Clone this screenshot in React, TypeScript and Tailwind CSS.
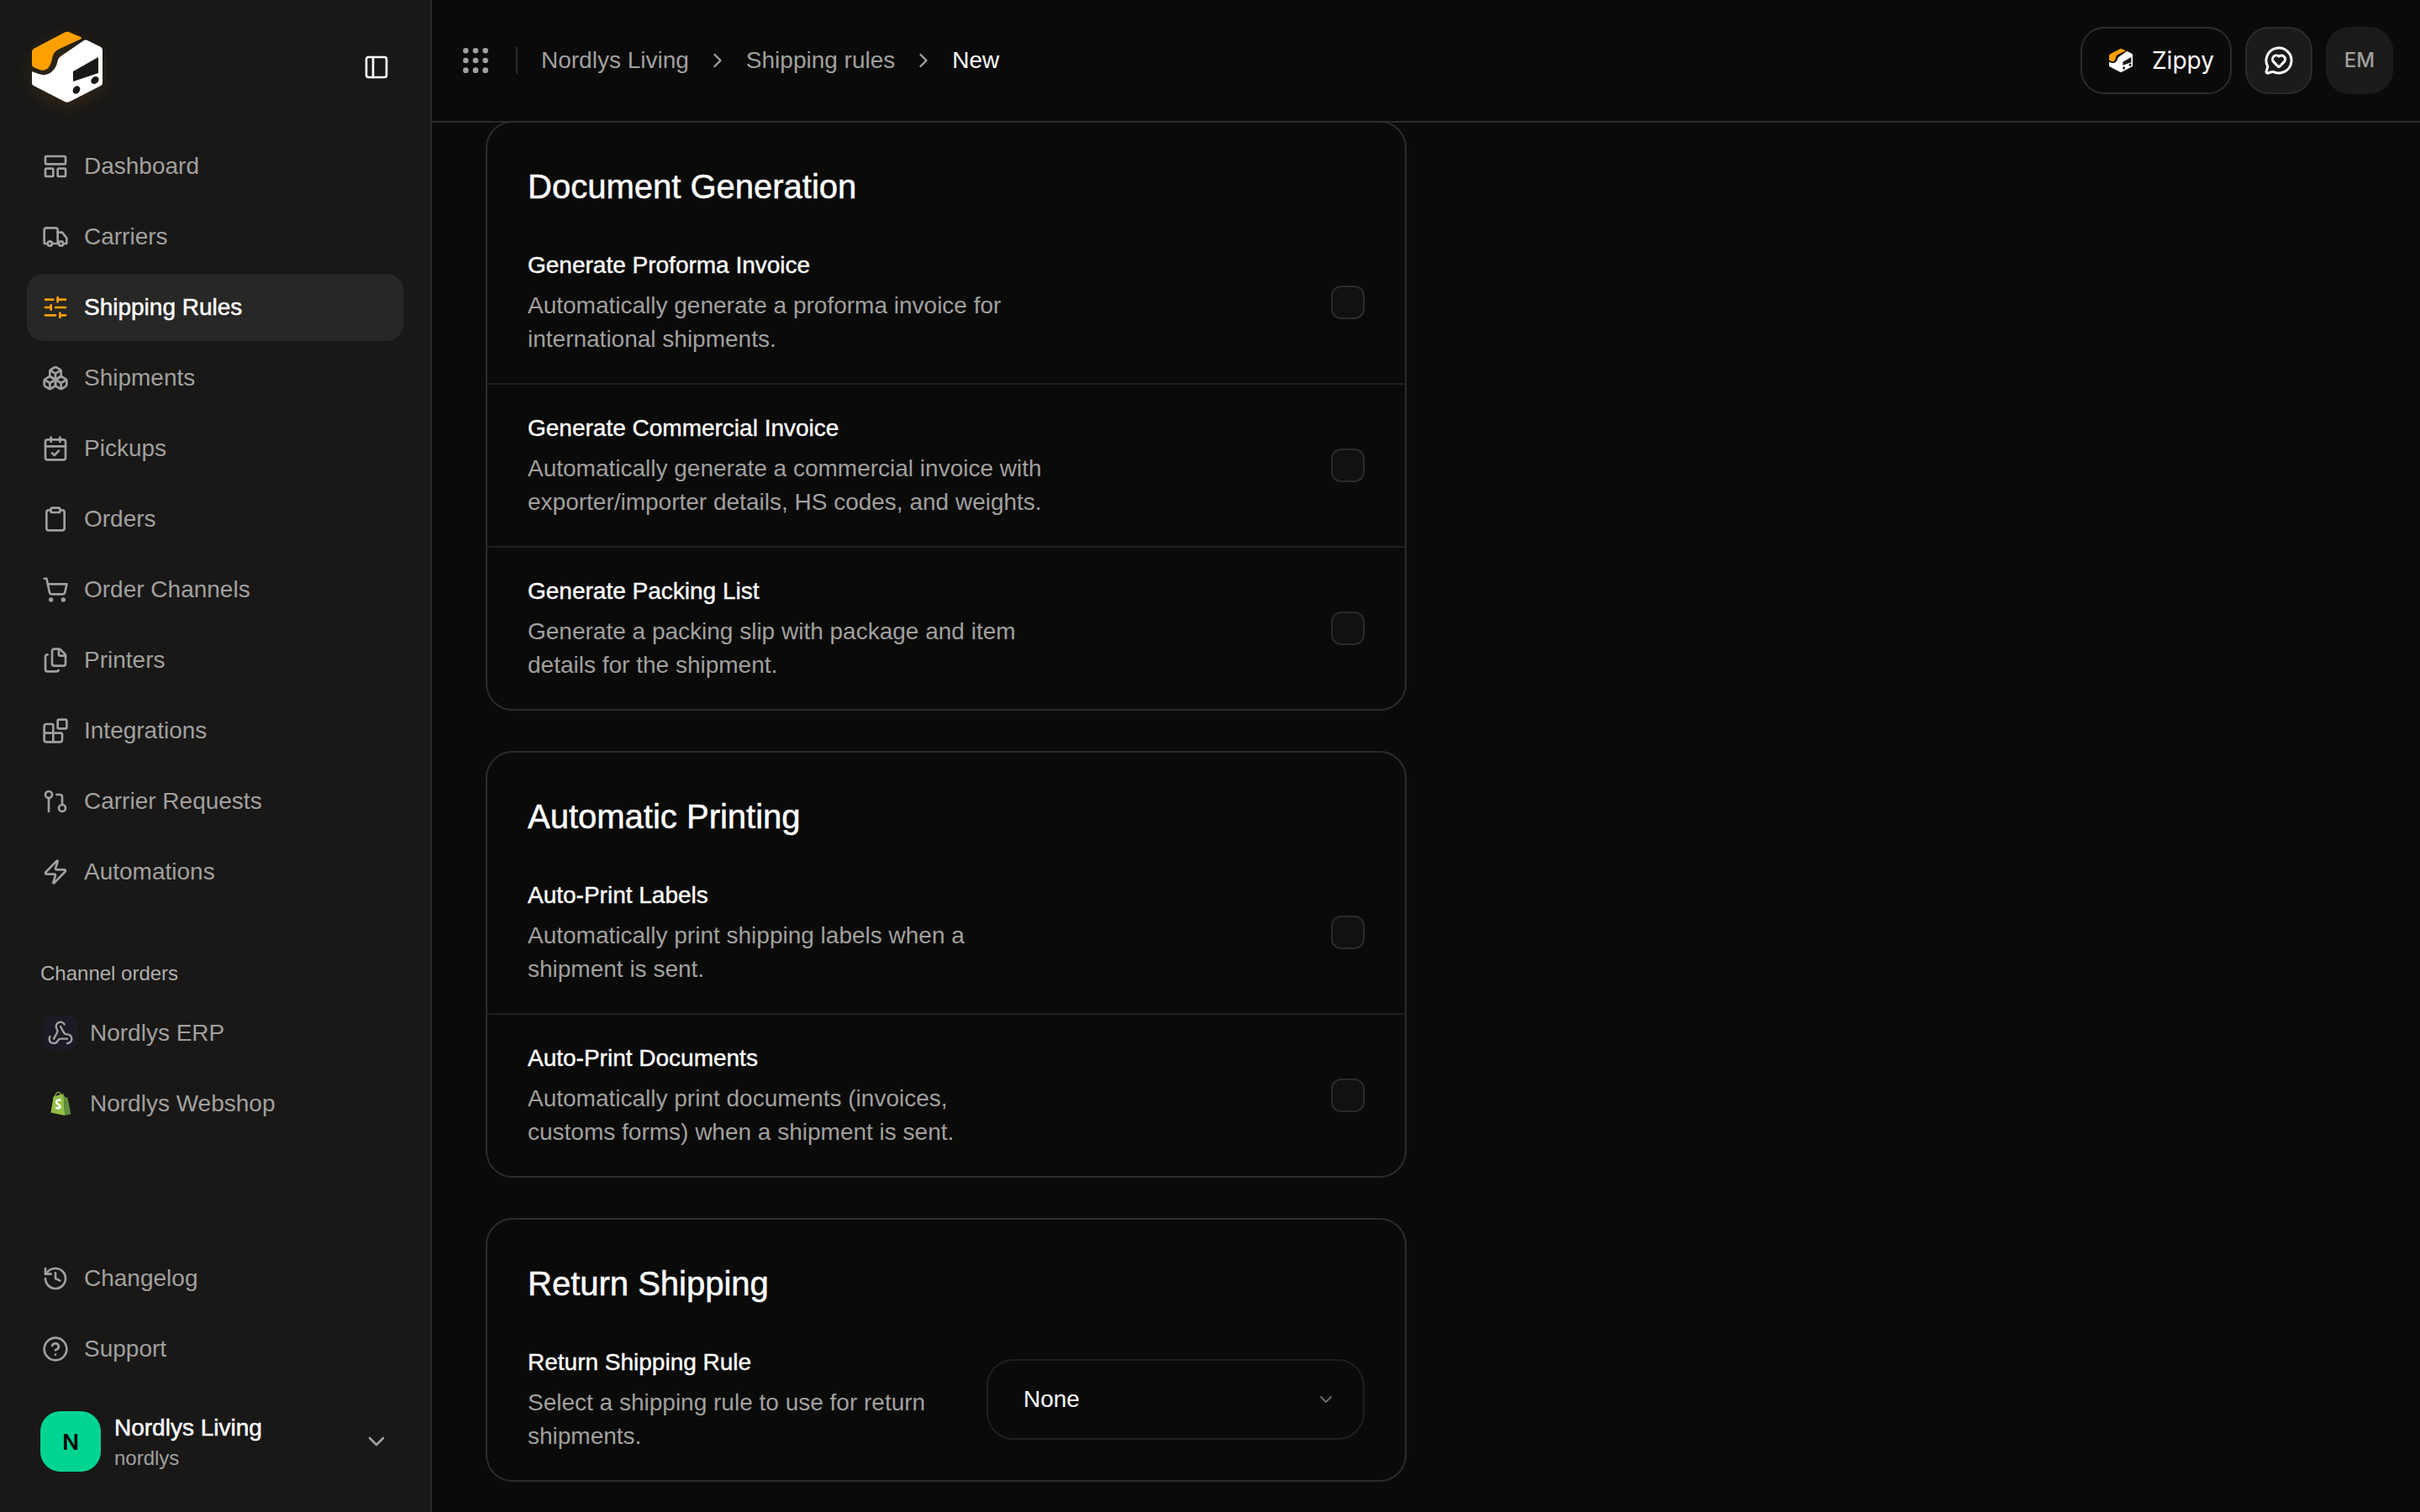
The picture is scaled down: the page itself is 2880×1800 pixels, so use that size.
import {
  Blocks,
  Boxes,
  CalendarCheck,
  ChevronDown,
  ChevronRight,
  CircleHelp,
  Clipboard,
  Files,
  GitPullRequest,
  Grip,
  History,
  LayoutPanelTop,
  MessageCircleHeart,
  PanelLeft,
  ShoppingCart,
  SlidersHorizontal,
  Truck,
  Webhook,
  Zap,
} from "lucide-react";

const navItems = [
  { label: "Dashboard", icon: LayoutPanelTop },
  { label: "Carriers", icon: Truck },
  { label: "Shipping Rules", icon: SlidersHorizontal, active: true },
  { label: "Shipments", icon: Boxes },
  { label: "Pickups", icon: CalendarCheck },
  { label: "Orders", icon: Clipboard },
  { label: "Order Channels", icon: ShoppingCart },
  { label: "Printers", icon: Files },
  { label: "Integrations", icon: Blocks },
  { label: "Carrier Requests", icon: GitPullRequest },
  { label: "Automations", icon: Zap },
];

const documentRows = [
  {
    title: "Generate Proforma Invoice",
    text: "Automatically generate a proforma invoice for\ninternational shipments.",
  },
  {
    title: "Generate Commercial Invoice",
    text: "Automatically generate a commercial invoice with\nexporter/importer details, HS codes, and weights.",
  },
  {
    title: "Generate Packing List",
    text: "Generate a packing slip with package and item\ndetails for the shipment.",
  },
];

const printingRows = [
  {
    title: "Auto-Print Labels",
    text: "Automatically print shipping labels when a\nshipment is sent.",
  },
  {
    title: "Auto-Print Documents",
    text: "Automatically print documents (invoices,\ncustoms forms) when a shipment is sent.",
  },
];

const Logo = ({ className }: { className: string }) => (
  <svg viewBox="32 32 96 96" className={className}>
    <path
      d="M77 38.5q3-1.5 6 0l13 5.5q2 1.5 0 2.5L71 58q-7 3-8.500 9.500Q61 78 56 82q-4 3-9 1l-7-3q-2-1-2-3V62q0-3 3-4.500z"
      fill="#ffa000"
    />
    <path
      d="M100 48q2-1 4 0l16 8q2 1 2 4v39q0 2-2 3L83 121q-3 1.500-6 0L40 102q-2-1-2-3V85l8 3q9 3 15-2 6-5 7.500-13 1-5 6-7.500z"
      fill="#fff"
    />
    <path d="M87 85l30-17v19L87 97z" fill="#191817" />
    <ellipse cx="91" cy="107" rx="4" ry="5" transform="rotate(35 91 107)" fill="#191817" />
    <ellipse cx="113" cy="95.500" rx="4" ry="5" transform="rotate(50 113 95.500)" fill="#191817" />
  </svg>
);

const ShopifyBag = () => (
  <svg viewBox="0 0 32 34" className="w-[30px] h-[30px]">
    <path d="M3 29L6.500 7.500 20 3.500 22 33z" fill="#95bf47" />
    <path d="M22 33l8-2-4.500-22.500-3.500-.5L20 3.500z" fill="#5e8e3e" />
    <path d="M8.500 7C9.500 3 12 1 14 1.500c2 .5 2.500 3 2.500 4.500" fill="none" stroke="#95bf47" strokeWidth="1.200" />
    <path
      d="M16.500 12.500c-2-1.200-6-.7-6 2.300 0 3 5 3 5 6 0 2.500-3.500 2.700-6 1"
      fill="none"
      stroke="#fff"
      strokeWidth="2.800"
    />
  </svg>
);

const Sidebar = () => (
  <aside className="w-[514px] h-full shrink-0 flex flex-col bg-[#191817] border-r-2 border-[#2c2b2a] px-8 pt-8 pb-12">
    <div className="flex items-center justify-between h-24 pr-[16px] mb-[30px]">
      <Logo className="w-24 h-24 drop-shadow-[0_6px_10px_rgba(255,160,0,0.12)]" />
      <PanelLeft size={32} strokeWidth={2} className="text-white" />
    </div>

    <nav className="flex flex-col gap-1">
      {navItems.map((item) => (
        <a
          key={item.label}
          className={`flex items-center gap-[18px] h-20 pl-[18px] rounded-[20px] text-[28px] leading-10 ${
            item.active
              ? "bg-[#272726] text-white [-webkit-text-stroke:0.5px_white]"
              : "text-[#a1a09e]"
          }`}
        >
          <item.icon size={32} strokeWidth={2} className={item.active ? "text-[#ff9f0a]" : "text-[#a1a09e]"} />
          {item.label}
        </a>
      ))}
    </nav>

    <div className="mt-[65px] mb-[15px] px-4 text-[24px] leading-8 text-[#b0afad]">Channel orders</div>
    <div className="flex flex-col gap-1">
      <a className="flex items-center gap-[15px] h-20 pl-5 text-[28px] text-[#a1a09e]">
        <span className="flex items-center justify-center w-10 h-10 rounded-[10px] bg-[#1b1b26]">
          <Webhook size={32} strokeWidth={1.800} className="text-[#a1a09e]" />
        </span>
        Nordlys ERP
      </a>
      <a className="flex items-center gap-[15px] h-20 pl-5 text-[28px] text-[#a1a09e]">
        <span className="flex items-center justify-center w-10 h-10">
          <ShopifyBag />
        </span>
        Nordlys Webshop
      </a>
    </div>

    <div className="mt-auto flex flex-col gap-1">
      <a className="flex items-center gap-[18px] h-20 pl-[18px] text-[28px] text-[#a1a09e]">
        <History size={32} strokeWidth={2} />
        Changelog
      </a>
      <a className="flex items-center gap-[18px] h-20 pl-[18px] text-[28px] text-[#a1a09e]">
        <CircleHelp size={32} strokeWidth={2} />
        Support
      </a>
    </div>

    <div className="flex items-center gap-4 mt-[34px] pl-4 pr-[16px]">
      <div className="flex items-center justify-center w-[72px] h-[72px] rounded-[24px] bg-[#00d492] font-['Inter',sans-serif] text-[26px] font-semibold text-black">
        N
      </div>
      <div className="flex-1">
        <div className="text-[28px] leading-10 text-white [-webkit-text-stroke:0.5px_white]">Nordlys Living</div>
        <div className="text-[24px] leading-8 text-[#a1a09e]">nordlys</div>
      </div>
      <ChevronDown size={32} strokeWidth={2} className="text-[#a1a09e]" />
    </div>
  </aside>
);

const Header = () => (
  <header className="relative z-10 flex items-center justify-between h-[146px] shrink-0 pl-8 pr-8 border-b-2 border-[#2c2b2a] bg-[#0a0a09]">
    <div className="flex items-center text-[28px] leading-10 text-[#a1a09e]">
      <Grip size={40} strokeWidth={2} className="text-[#a1a09e]" />
      <div className="w-[2px] h-8 bg-[#2c2b2a] mx-7" />
      <div className="flex items-center gap-5">
        <span>Nordlys Living</span>
        <ChevronRight size={28} strokeWidth={2} />
        <span>Shipping rules</span>
        <ChevronRight size={28} strokeWidth={2} />
        <span className="text-white">New</span>
      </div>
    </div>

    <div className="flex items-center gap-4">
      <button className="flex items-center gap-[21px] h-20 w-[180px] pl-[30px] rounded-[28px] border-2 border-[#2c2b2a] font-['Inter',sans-serif] text-[28px] text-white">
        <Logo className="w-8 h-8" />
        Zippy
      </button>
      <button className="flex items-center justify-center w-20 h-20 rounded-[28px] border-2 border-[#2c2b2a] bg-[#1b1b1a] text-white">
        <MessageCircleHeart size={36} strokeWidth={2} />
      </button>
      <div className="flex items-center justify-center w-20 h-20 rounded-[28px] bg-[#1b1b1a] font-['Inter',sans-serif] text-[24px] font-medium text-[#a1a09e]">
        EM
      </div>
    </div>
  </header>
);

const Checkbox = () => <span className="block w-10 h-10 shrink-0 rounded-xl border-2 border-[#2c2b2a] bg-[#111110]" />;

const RowText = ({ title, text }: { title: string; text: string }) => (
  <div>
    <div className="mb-2 text-[28px] leading-10 text-white [-webkit-text-stroke:0.4px_white]">{title}</div>
    <div className="whitespace-pre-line text-[28px] leading-10 text-[#a1a09e]">{text}</div>
  </div>
);

const Card = ({ title, children }: { title: string; children: React.ReactNode }) => (
  <section className="rounded-[32px] border-2 border-[#2c2b2a]">
    <h2 className="px-12 pt-12 pb-[14px] text-[40px] leading-14 text-white [-webkit-text-stroke:0.5px_white]">
      {title}
    </h2>
    <div className="divide-y-2 divide-[#1f1f1e]">{children}</div>
  </section>
);

const ToggleRow = ({ title, text }: { title: string; text: string }) => (
  <div className="flex items-center justify-between px-12 py-8">
    <RowText title={title} text={text} />
    <Checkbox />
  </div>
);

export default function App() {
  return (
    <div className="flex w-screen h-screen overflow-hidden bg-[#0a0a09] font-['Liberation_Sans',sans-serif]">
      <Sidebar />
      <main className="flex flex-col flex-1 min-w-0">
        <Header />
        <div className="flex-1 overflow-hidden px-16">
          <div className="w-[1096px] -mt-[2px] flex flex-col gap-12">
            <Card title="Document Generation">
              {documentRows.map((row) => (
                <ToggleRow key={row.title} {...row} />
              ))}
            </Card>
            <Card title="Automatic Printing">
              {printingRows.map((row) => (
                <ToggleRow key={row.title} {...row} />
              ))}
            </Card>
            <Card title="Return Shipping">
              <div className="flex items-center justify-between px-12 py-8">
                <RowText
                  title="Return Shipping Rule"
                  text={"Select a shipping rule to use for return\nshipments."}
                />
                <div className="flex items-center justify-between w-[450px] h-24 pl-[42px] pr-[32px] rounded-[32px] border-2 border-[#1f1f1e] text-[28px] text-white">
                  None
                  <ChevronDown size={24} strokeWidth={2} className="text-[#6b6b69]" />
                </div>
              </div>
            </Card>
          </div>
        </div>
      </main>
    </div>
  );
}
